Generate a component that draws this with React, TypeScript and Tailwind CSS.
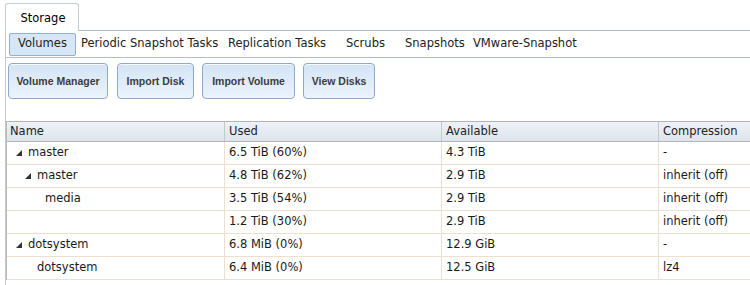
import React from "react";

const font = { fontFamily: '"DejaVu Sans", Verdana, sans-serif' };

type Row = { name: string; level: number; arrow: boolean; used: string; avail: string; comp: string };

const rows: Row[] = [
  { name: "master", level: 0, arrow: true, used: "6.5 TiB (60%)", avail: "4.3 TiB", comp: "-" },
  { name: "master", level: 1, arrow: true, used: "4.8 TiB (62%)", avail: "2.9 TiB", comp: "inherit (off)" },
  { name: "media", level: 2, arrow: false, used: "3.5 TiB (54%)", avail: "2.9 TiB", comp: "inherit (off)" },
  { name: "", level: 2, arrow: false, used: "1.2 TiB (30%)", avail: "2.9 TiB", comp: "inherit (off)" },
  { name: "dotsystem", level: 0, arrow: true, used: "6.8 MiB (0%)", avail: "12.9 GiB", comp: "-" },
  { name: "dotsystem", level: 1, arrow: false, used: "6.4 MiB (0%)", avail: "12.5 GiB", comp: "lz4" },
];

function Arrow() {
  return (
    <svg width="6" height="6" viewBox="0 0 6 6" className="mr-[6px] shrink-0">
      <polygon points="6,0 6,6 0,6" fill="#333" />
    </svg>
  );
}

const btn =
  "h-[36px] pt-[2px] rounded-[4px] border border-[#8eaacb] bg-gradient-to-b from-[#d3e4f6] to-[#ecf4fc] text-[10.5px] font-bold text-[#3c3c3c] flex items-center justify-center shadow-[inset_0_1px_0_#f4f8fd]";

const btnFont = { fontFamily: '"Liberation Sans", Arial, sans-serif' };

export default function App() {
  return (
    <div className="w-[750px] h-[285px] bg-white overflow-hidden text-black text-[11.5px]" style={font}>
      {/* top tab bar */}
      <div className="flex items-end h-[31px]">
        <div className="w-[5px] h-full" />
        <div className="w-[74px] h-[28px] pt-[3px] pl-[2px] border border-b-0 border-[#c5cdd8] rounded-t-[3px] bg-white flex items-center justify-center">
          Storage
        </div>
        <div className="flex-1 border-b border-[#b4bcc8]" />
      </div>
      <div className="ml-[5px] border-l border-[#c8c8c8] h-[254px]">
        {/* sub tabs */}
        <div className="flex items-center h-[27px] border-b border-[#b4bcc8] text-[#222]">
          <div className="ml-[3px] w-[67px] h-[23px] bg-[#d6e6f6] border border-[#93b1d1] rounded-[2px] flex items-center justify-center">
            Volumes
          </div>
          <span className="ml-[5px] w-[147px] whitespace-nowrap">Periodic Snapshot Tasks</span>
          <span className="w-[118px] whitespace-nowrap">Replication Tasks</span>
          <span className="w-[59px] whitespace-nowrap">Scrubs</span>
          <span className="w-[68px] whitespace-nowrap">Snapshots</span>
          <span className="whitespace-nowrap">VMware-Snapshot</span>
        </div>
        {/* buttons */}
        <div className="flex pl-[2px] pt-[5px] h-[63px]" style={btnFont}>
          <button className={`${btn} w-[100px]`}>Volume Manager</button>
          <button className={`${btn} w-[77px] ml-[9px]`}>Import Disk</button>
          <button className={`${btn} w-[93px] ml-[8px]`}>Import Volume</button>
          <button className={`${btn} w-[72px] ml-[8px]`}>View Disks</button>
        </div>
        {/* grid */}
        <div className="border-l border-[#b8b8b8]">
          <div className="flex h-[21px] border-t border-b border-[#b5b5b5] bg-gradient-to-b from-[#eef2f7] to-[#dde4ec] text-[#222]">
            <div className="w-[218px] pl-[3px] flex items-center border-r border-[#c4c8cc]">Name</div>
            <div className="w-[217px] pl-[4px] flex items-center border-r border-[#c4c8cc]">Used</div>
            <div className="w-[217px] pl-[4px] flex items-center border-r border-[#c4c8cc]">Available</div>
            <div className="flex-1 pl-[4px] flex items-center">Compression</div>
          </div>
          {rows.map((r, i) => (
            <div key={i} className="flex h-[23px] border-b border-[#f0dfcf] text-[#1a1a1a]">
              <div
                className="w-[218px] flex items-center border-r border-[#f0dfcf]"
                style={{ paddingLeft: 9 + r.level * 9 - (r.level === 2 ? 1 : 0) }}
              >
                {r.arrow ? <Arrow /> : <span className="w-[12px] shrink-0" />}
                <span>{r.name}</span>
              </div>
              <div className="w-[217px] pl-[4px] flex items-center border-r border-[#f0dfcf]">{r.used}</div>
              <div className="w-[217px] pl-[4px] flex items-center border-r border-[#f0dfcf]">{r.avail}</div>
              <div className="flex-1 pl-[4px] flex items-center">{r.comp}</div>
            </div>
          ))}
        </div>
      </div>
    </div>
  );
}
